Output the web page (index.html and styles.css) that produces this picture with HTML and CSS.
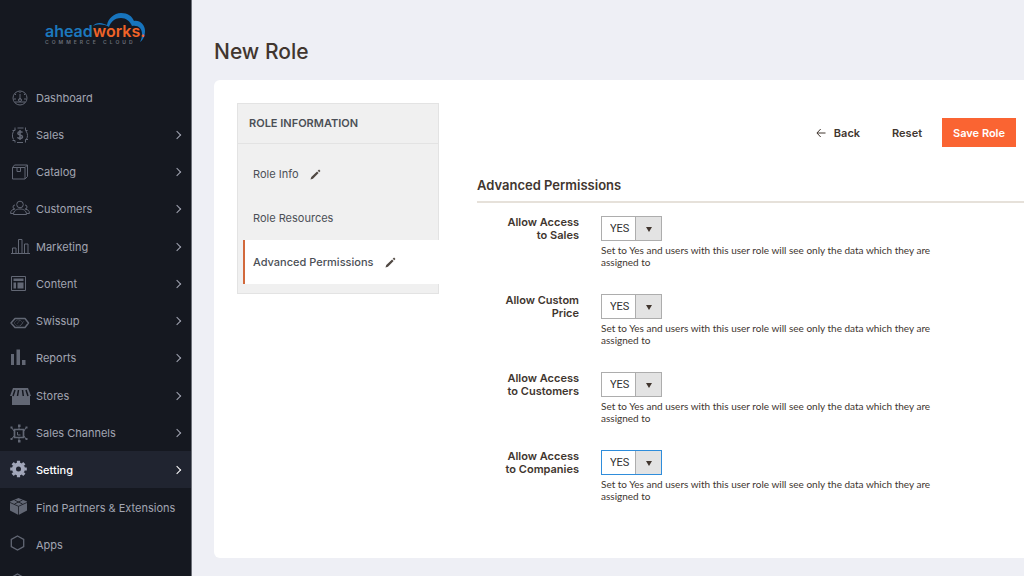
FILE: index.html
```html
<!DOCTYPE html>
<html lang="en">
  <head>
    <meta charset="utf-8" />
    <title>New Role</title>
    <link rel="stylesheet" href="styles.css">
  </head>
  <body>
    <aside class="sidebar">
      <a href="#" class="logo">
        <svg width="120" height="36" viewBox="0 0 120 36">
          <path d="M50 14c2-3 7-4 11-2l3 1c1-6 7-12 14-12s11 3 13 8c6-1 11 4 11 10 0 5-2 9-5 11 1.500-3 2-5 2-8 0-6-4-9-10-8-2-5-6-8-11-8-7 0-11 5-12 9-5-3-11-3-16-1z" fill="#1774bd" />
          <text class="logo-name" x="2" y="25"><tspan fill="#1c78be">ahead</tspan><tspan fill="#f06428">works.</tspan></text>
          <text class="logo-sub" x="2" y="32">COMMERCE CLOUD</text>
        </svg>
      </a>
      <nav class="menu">
        <ul>
          <li><a href="#">
            <svg class="icon" viewBox="0 0 20 20"><circle cx="10" cy="10" r="7" /><path d="M10 6v6M10 4v1M5 6l1 1M15 6l-1 1M4 11h2M14 11h2M5 14h10" /><circle cx="10" cy="12" r="1.5" /></svg>
            <span>Dashboard</span></a></li>
          <li><a href="#">
            <svg class="icon" viewBox="0 0 20 20"><path d="M5 4.500a8 8 0 0 0-1.500 10M7 17.500h6M16 15a8 8 0 0 0 0-9M13.500 3h-6M5 2.500v3H2.500M15.500 17.500v-3h2.500M15.500 2.500v3h2M5 17.500v-2H2.500" /><path d="M12.500 7.500c-.5-1-4.500-1.500-4.700.7 0 2.200 4.700 1.200 4.700 3.600 0 2.200-4.500 2-5 .4M10 5v10" stroke-width="1.500" /></svg>
            <span>Sales</span><i class="arrow"></i></a></li>
          <li><a href="#">
            <svg class="icon" viewBox="0 0 20 20"><path d="M2.500 5.500h12.500v11.500h-12.500zM2.500 5.500l2-2.500h13l-2.500 2.500M17.500 3v11.500l-2.500 2.500M7 5.500v4h3.500v-4" /></svg>
            <span>Catalog</span><i class="arrow"></i></a></li>
          <li><a href="#">
            <svg class="icon" viewBox="0 0 20 20"><circle cx="10" cy="5.500" r="3.300" /><path d="M3.500 15.500c0-4 3-5.500 6.500-5.500s6.500 1.500 6.500 5.500z" /><path d="M5 6a2 2 0 1 0 0 4M15 6a2 2 0 1 1 0 4M3.500 14.500H.6c0-3 1.500-4 4-4.200M16.500 14.500h2.900c0-3-1.500-4-4-4.200" /></svg>
            <span>Customers</span><i class="arrow"></i></a></li>
        </ul>
        <ul>
          <li><a href="#">
            <svg class="icon" viewBox="0 0 20 20"><path d="M1 16.500h19M2.500 16.500v-5.500h3.500v5.500M8.500 16.500v-14h3.500v14M14.500 16.500v-9.500h3.500v9.500" /></svg>
            <span>Marketing</span><i class="arrow"></i></a></li>
          <li><a href="#">
            <svg class="icon" viewBox="0 0 20 20"><path d="M1.500 2.500h14v14h-14z" /><path class="solid" d="M3.500 4.500h10v2.500h-10zM3.500 8.500h2.500v6h-2.500zM7.500 8.500h6v6h-6z" /></svg>
            <span>Content</span><i class="arrow"></i></a></li>
          <li><a href="#">
            <svg class="icon" viewBox="0 0 20 20"><path d="M5 7.500h10l3.500 4.500-3.500 4.500H5L1 12z" stroke-width="1.500" stroke-linejoin="round" /><path d="M4 12l3-3h3l3 3-3 3H7zM7 13l3-4M10 15l4-5" opacity=".4" /></svg>
            <span>Swissup</span><i class="arrow"></i></a></li>
          <li><a href="#">
            <svg class="icon" viewBox="0 0 20 20"><path class="solid" d="M1 6h3v11H1zM6.500 1.500h3.500v15.500H6.500zM12 12h3.500v5H12z" /></svg>
            <span>Reports</span><i class="arrow"></i></a></li>
        </ul>
        <ul>
          <li><a href="#">
            <svg class="icon" viewBox="0 0 20 20"><path class="solid" d="M3 2h15l3 8h-1v9H2v-9H0z" /><path class="cut" d="M5 4L3 10M8.500 4L7.500 10M12.500 4l.8 6M16 4l2 6" stroke-width="1.500" /></svg>
            <span>Stores</span><i class="arrow"></i></a></li>
          <li><a href="#">
            <svg class="icon" viewBox="0 0 20 20"><path d="M4.500 6.500h9v8h-9z" stroke-width="1.700" /><path d="M7.500 9v3h3M9 6V3M9 15v3M4 8L1.500 4.500M14 8l2-3.500M4 13l-2.500 3M14 13l2 3" /><path class="solid" d="M8 1.500h2.500v2.500H8zM8 17h2.500v2.500H8zM.5 3.500h2v2h-2zM15.500 3.500h2v2h-2zM.5 15h2v2h-2zM15.500 15h2v2h-2z" /></svg>
            <span>Sales Channels</span><i class="arrow"></i></a></li>
          <li class="current"><a href="#">
            <svg class="icon" viewBox="0 0 20 20"><circle cx="8.500" cy="9" r="4.500" stroke-width="4" /><path d="M8.500 3V.7M8.500 15v2.300M2.500 9H.2M14.500 9h2.300M4.300 4.800L2.700 3.200M12.700 4.800l1.600-1.600M4.300 13.200l-1.600 1.600M12.700 13.200l1.600 1.600" stroke-width="3.200" /></svg>
            <span>Setting</span><i class="arrow"></i></a></li>
        </ul>
        <ul>
          <li><a href="#">
            <svg class="icon" viewBox="0 0 20 20"><path class="solid" d="M8.500 0l8.500 3.500v9l-8.500 4.500-8.500-4.500v-9z" /><path class="cut" d="M0 4.500l8.500 3.800 8.500-3.800M8.500 8.300V17M4.500 2l8 4M12.500 2l-8 4" stroke-width=".8" /></svg>
            <span>Find Partners &amp; Extensions</span></a></li>
          <li><a href="#">
            <svg class="icon" viewBox="0 0 20 20"><path d="M7.500 1l6.200 3.500v7l-6.200 3.500-6.200-3.500v-7z" stroke-width="1.300" /></svg>
            <span>Apps</span></a></li>
          <li><a href="#">
            <svg class="icon" viewBox="0 0 20 20"><path d="M7.500 2l6.200 3.500v7l-6.200 3.500-6.200-3.500v-7z" stroke-width="1.300" /></svg></a></li>
        </ul>
      </nav>
    </aside>

    <main class="page">
      <h1>New Role</h1>
      <div class="card">
        <nav class="tabs">
          <h2>ROLE INFORMATION</h2>
          <ul>
            <li><a href="#">Role Info
              <svg class="pencil" viewBox="0 0 12 12"><path d="M.5 11.500l.9-2.700L7.700 2.600l1.700 1.700-6.200 6.200zM8.400 1.900L9.900.6l1.500 1.500-1.300 1.500z" /></svg></a></li>
            <li><a href="#">Role Resources</a></li>
            <li class="active"><a href="#">Advanced Permissions
              <svg class="pencil" viewBox="0 0 12 12"><path d="M.5 11.500l.9-2.700L7.700 2.600l1.700 1.700-6.200 6.200zM8.400 1.900L9.900.6l1.500 1.500-1.300 1.500z" /></svg></a></li>
          </ul>
        </nav>

        <form class="content">
          <div class="actions">
            <button type="button">
              <svg class="back" viewBox="0 0 10 10"><path d="M9.500 5H1M4.700 1L.9 5l3.800 4" /></svg>Back</button>
            <button type="reset">Reset</button>
            <button type="submit" class="primary">Save Role</button>
          </div>
          <h3>Advanced Permissions</h3>

          <div class="field">
            <label for="sales">Allow Access<br>to Sales</label>
            <div class="control">
              <div class="select"><select id="sales"><option>YES</option></select></div>
              <p>Set to Yes and users with this user role will see only the data which they are assigned to</p>
            </div>
          </div>
          <div class="field">
            <label for="price">Allow Custom<br>Price</label>
            <div class="control">
              <div class="select"><select id="price"><option>YES</option></select></div>
              <p>Set to Yes and users with this user role will see only the data which they are assigned to</p>
            </div>
          </div>
          <div class="field">
            <label for="customers">Allow Access<br>to Customers</label>
            <div class="control">
              <div class="select"><select id="customers"><option>YES</option></select></div>
              <p>Set to Yes and users with this user role will see only the data which they are assigned to</p>
            </div>
          </div>
          <div class="field">
            <label for="companies">Allow Access<br>to Companies</label>
            <div class="control">
              <div class="select focused"><select id="companies"><option>YES</option></select></div>
              <p>Set to Yes and users with this user role will see only the data which they are assigned to</p>
            </div>
          </div>
        </form>
      </div>
    </main>
  </body>
</html>
```
FILE: styles.css
```css
* {
  box-sizing: border-box;
}
body {
  margin: 0;
  display: flex;
  height: 100vh;
  overflow: hidden;
  background-color: #eeeff5;
  font-family: Inter, "Open Sans", sans-serif;
  font-size: 11px;
  color: #41362f;
}
a {
  color: inherit;
  text-decoration: none;
}
ul {
  list-style: none;
  margin: 0;
  padding: 0;
}

/* sidebar */
.sidebar {
  flex: 0 0 192px;
  overflow: hidden;
  background-color: #151820;
  border-right: 1px solid #6d7078;
}
.logo {
  display: block;
  height: 79px;
  padding: 12px 0 0 43px;
}
.logo svg {
  display: block;
}
.logo-name {
  font-size: 16px;
  font-weight: 600;
}
.logo-sub {
  font-size: 5px;
  font-weight: 600;
  letter-spacing: 3px;
  fill: #6a6e78;
}
.menu {
  display: flex;
  flex-direction: column;
  gap: 1px;
}
.menu a {
  display: flex;
  align-items: center;
  height: 37px;
  padding: 0 9px 0 10px;
  color: #a2a5b2;
}
.menu span {
  flex: 1;
  padding-left: 6px;
  white-space: nowrap;
}
.icon {
  width: 20px;
  height: 20px;
  overflow: visible;
  fill: none;
  stroke: #626774;
}
.icon .solid {
  fill: #626774;
  stroke: none;
}
.icon .cut {
  stroke: #151820;
}
.arrow {
  width: 6px;
  height: 6px;
  margin-right: 2px;
  border-top: 1px solid #a2a5b2;
  border-right: 1px solid #a2a5b2;
  transform: rotate(45deg);
}
.menu .current {
  background-color: #202430;
}
.menu .current a {
  color: #fff;
  font-weight: 500;
}
.current .icon {
  stroke: #a2a7ba;
}
.current .arrow {
  border-color: #fff;
}

/* page */
.page {
  flex: 1;
  min-width: 0;
  padding: 37px 0 18px 22px;
  display: flex;
  flex-direction: column;
}
h1 {
  margin: 0 0 13px;
  font-size: 21px;
  line-height: 30px;
  font-weight: 500;
}
.card {
  flex: 1;
  display: flex;
  align-items: flex-start;
  gap: 38px;
  padding: 23px 0 0 23px;
  background-color: #fff;
  border-radius: 6px 0 0 6px;
}

/* role tabs */
.tabs {
  flex: 0 0 202px;
  background-color: #f0f0f0;
  border: 1px solid #e3e3e3;
  color: #4b4f56;
}
.tabs h2 {
  margin: 0;
  padding-left: 11px;
  font-size: 11px;
  line-height: 39px;
  font-weight: 600;
  border-bottom: 1px solid #e3e3e3;
}
.tabs ul {
  padding: 8px 0 9px 5px;
}
.tabs a {
  display: flex;
  align-items: center;
  gap: 12px;
  height: 44px;
  padding-left: 10px;
}
.tabs .active {
  margin-right: -1px;
  background-color: #fff;
}
.tabs .active a {
  padding-left: 8px;
  border-left: 2px solid #d2693c;
  font-weight: 500;
}
.pencil {
  width: 11px;
  height: 11px;
  fill: #514943;
}

/* form */
.content {
  flex: 1;
  min-width: 0;
  padding-top: 15px;
}
.actions {
  display: flex;
  justify-content: flex-end;
  gap: 8px;
  padding-right: 8px;
}
button {
  display: flex;
  align-items: center;
  height: 29px;
  padding: 0 12px;
  border: none;
  background: none;
  font-family: inherit;
  font-size: 11px;
  font-weight: 600;
  color: #41362f;
  cursor: pointer;
}
.back {
  width: 10px;
  height: 10px;
  margin-right: 8px;
  fill: none;
  stroke: #41362f;
}
.primary {
  padding: 0 11px;
  background-color: #fa6432;
  color: #fff;
}
h3 {
  margin: 25px 0 13px;
  padding-bottom: 3px;
  font-size: 13px;
  line-height: 26px;
  font-weight: 600;
  border-bottom: 2px solid #e6e1da;
}
.field {
  display: flex;
  gap: 22px;
  min-height: 78px;
}
.field label {
  flex: 0 0 102px;
  text-align: right;
  line-height: 13px;
  font-weight: 600;
}
.control {
  max-width: 350px;
}
.select {
  position: relative;
  width: 61px;
}
.select::after {
  content: "";
  position: absolute;
  top: 11px;
  right: 10px;
  border: 3px solid transparent;
  border-top: 5px solid #41362f;
  border-bottom: none;
  pointer-events: none;
}
select {
  display: block;
  appearance: none;
  width: 100%;
  height: 25px;
  padding: 0 8px;
  border: 1px solid #adadad;
  border-radius: 0;
  background: linear-gradient(to right, #fff 33px, #adadad 33px, #adadad 34px, #e3e3e3 34px);
  font-family: Roboto, sans-serif;
  font-size: 11px;
  color: #303030;
}
.select.focused select {
  border: 1px solid #2f8ddb;
}
.control p {
  margin: 3px 0 0;
  font-family: Lato, sans-serif;
  font-size: 10px;
  line-height: 12px;
}
```
